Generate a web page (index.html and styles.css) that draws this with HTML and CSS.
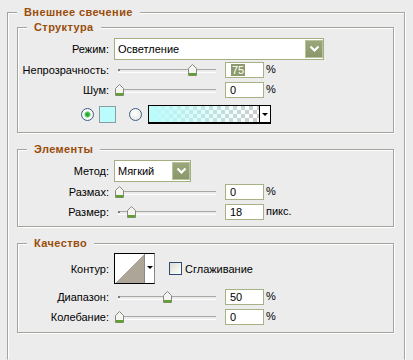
FILE: index.html
```html
<!DOCTYPE html>
<html lang="ru">
<head>
    <meta charset="UTF-8">
    <title>Внешнее свечение</title>
    <link rel="stylesheet" href="styles.css">
</head>
<body>
    <div class="group outer">
        <span class="title">Внешнее свечение</span>

        <div class="group structure">
            <span class="title">Структура</span>
            <div class="row r-select">
                <span class="lbl">Режим:</span>
                <div class="select wide">Осветление<span class="drop"><svg width="11" height="8" viewBox="0 0 11 8"><polyline points="1.5,1.5 5.5,5.5 9.5,1.5" fill="none" stroke="#fff" stroke-width="2.2"/></svg></span></div>
            </div>
            <div class="row r-input first">
                <span class="lbl">Непрозрачность:</span>
                <div class="slider"><span class="thumb" style="left: 74px"></span></div>
                <div class="field"><span class="sel">75</span></div>
                <span class="unit">%</span>
            </div>
            <div class="row r-input">
                <span class="lbl">Шум:</span>
                <div class="slider"><span class="thumb" style="left: 1px"></span></div>
                <div class="field">0</div>
                <span class="unit">%</span>
            </div>
            <div class="row r-color">
                <span class="radio on"></span>
                <span class="swatch"></span>
                <span class="radio gap"></span>
                <div class="gradient"><span class="grad-fill"></span><span class="arrow"><i></i></span></div>
            </div>
        </div>

        <div class="group elements">
            <span class="title">Элементы</span>
            <div class="row r-select">
                <span class="lbl">Метод:</span>
                <div class="select short">Мягкий<span class="drop"><svg width="11" height="8" viewBox="0 0 11 8"><polyline points="1.5,1.5 5.5,5.5 9.5,1.5" fill="none" stroke="#fff" stroke-width="2.2"/></svg></span></div>
            </div>
            <div class="row r-input first">
                <span class="lbl">Размах:</span>
                <div class="slider"><span class="thumb" style="left: 1px"></span></div>
                <div class="field">0</div>
                <span class="unit">%</span>
            </div>
            <div class="row r-input">
                <span class="lbl">Размер:</span>
                <div class="slider"><span class="thumb" style="left: 13px"></span></div>
                <div class="field">18</div>
                <span class="unit">пикс.</span>
            </div>
        </div>

        <div class="group quality">
            <span class="title">Качество</span>
            <div class="row r-contour">
                <span class="lbl">Контур:</span>
                <div class="contour"><span class="curve"></span><span class="arrow"><i></i></span></div>
                <span class="check"></span>
                <span class="check-text">Сглаживание</span>
            </div>
            <div class="row r-input first">
                <span class="lbl">Диапазон:</span>
                <div class="slider"><span class="thumb" style="left: 49px"></span></div>
                <div class="field">50</div>
                <span class="unit">%</span>
            </div>
            <div class="row r-input">
                <span class="lbl">Колебание:</span>
                <div class="slider"><span class="thumb" style="left: 1px"></span></div>
                <div class="field">0</div>
                <span class="unit">%</span>
            </div>
        </div>
    </div>
</body>
</html>
```

FILE: styles.css
```css
* {
    box-sizing: border-box;
}
html {
    overflow: hidden;
}
body {
    margin: 0;
    background: #ececec;
    font-family: 'Liberation Sans', Arial, sans-serif;
    font-size: 11px;
    color: #000;
    height: 360px;
    overflow: hidden;
}
.group {
    position: relative;
    border: 1px solid #a4a49c;
    box-shadow: 1px 1px 0 #fff, inset 1px 1px 0 #fff;
}
.title {
    position: absolute;
    top: -7px;
    left: 9px;
    padding: 0 7px;
    background: #ececec;
    color: #9a4d0a;
    font-weight: bold;
    letter-spacing: 0.4px;
    line-height: 13px;
}
.outer {
    margin: 12px 0 0 7px;
    width: 398px;
    height: 348px;
    border-bottom-color: #ececec;
    box-shadow: 1px 0 0 #fff, inset 1px 1px 0 #fff;
    padding: 14px 0 0 9px;
}
.outer > .group {
    width: 377px;
}
.structure {
    height: 106px;
    padding-top: 10px;
}
.elements {
    margin-top: 16px;
    height: 78px;
    padding-top: 10px;
}
.quality {
    margin-top: 16px;
    height: 90px;
    padding-top: 9px;
}
.row {
    display: flex;
    align-items: center;
}
.lbl {
    width: 91px;
    text-align: right;
    margin-right: 5px;
    white-space: nowrap;
}
.r-select {
    height: 22px;
}
.r-input {
    height: 16px;
    margin-top: 4px;
}
.r-input.first {
    margin-top: 2px;
}
.quality .r-input.first {
    margin-top: 5px;
}
.r-color {
    height: 19px;
    margin-top: 7px;
    padding-left: 63px;
}
.r-contour {
    height: 31px;
}

/* select */
.select {
    position: relative;
    height: 22px;
    background: #fff;
    border: 1px solid #a3af80;
    padding: 4px 0 0 3px;
    line-height: 13px;
}
.select.wide {
    width: 210px;
}
.select.short {
    width: 77px;
}
.drop {
    position: absolute;
    right: 0;
    top: 1px;
    width: 18px;
    height: 18px;
    background: linear-gradient(#9aa77a, #8a976a);
    border: 1px solid #b8c29c;
    display: flex;
    align-items: center;
    justify-content: center;
}

/* slider */
.slider {
    position: relative;
    width: 104px;
    height: 16px;
}
.slider::before {
    content: '';
    position: absolute;
    left: 4px;
    right: 2px;
    top: 7px;
    height: 2px;
    border-top: 1px solid #a9a9a3;
    border-bottom: 1px solid #fff;
}
.slider::after {
    content: '';
    position: absolute;
    left: 4px;
    top: 7px;
    width: 2px;
    height: 2px;
    background: #7c7c78;
}
.thumb {
    position: absolute;
    top: 2px;
    width: 9px;
    height: 12px;
    z-index: 1;
    background: url("data:image/svg+xml,%3Csvg xmlns='http://www.w3.org/2000/svg' width='9' height='12'%3E%3Cpath d='M0.5 4.5 L4.5 0.5 L8.5 4.5 V11.5 H0.5 Z' fill='%23f4f4f0' stroke='%23888880'/%3E%3Crect x='1' y='9' width='7' height='2.5' fill='%235ea12e'/%3E%3C/svg%3E") no-repeat;
}
.field {
    width: 39px;
    height: 16px;
    margin-left: 7px;
    background: #fff;
    border: 1px solid #a6b283;
    padding: 1px 0 0 4px;
    line-height: 12px;
}
.sel {
    display: inline-block;
    background: #8d9a6c;
    color: #fff;
    padding: 0 1px;
    margin-left: 1px;
}
.unit {
    margin-left: 2px;
    margin-top: -3px;
}

/* colour row */
.radio {
    width: 13px;
    height: 13px;
    border-radius: 50%;
    border: 1px solid #3d5f86;
    background: radial-gradient(circle at 40% 40%, #fff, #e3e3dc);
}
.radio.on {
    background: radial-gradient(circle, #149a2a 0, #3cc04a 2px, #a8e0a0 3px, #fff 3.5px, #e6e6e0 100%);
}
.radio.gap {
    margin-left: 13px;
}
.swatch {
    width: 17px;
    height: 17px;
    margin-left: 5px;
    background: #bafcfb;
    border: 1px solid #8a9ea2;
}
.gradient {
    display: flex;
    width: 123px;
    height: 19px;
    margin-left: 6px;
    border: 1px solid #000;
    border-bottom-width: 2px;
    background-color: #fff;
    background-image:
        linear-gradient(45deg, #ccc 25%, transparent 25%, transparent 75%, #ccc 75%),
        linear-gradient(45deg, #ccc 25%, transparent 25%, transparent 75%, #ccc 75%);
    background-size: 8px 8px;
    background-position: 0 0, 4px 4px;
}
.grad-fill {
    flex: 1;
    background: linear-gradient(to right, #bafcfb, rgba(186, 252, 251, 0));
}
.arrow {
    width: 11px;
    background: #fff;
    border-left: 1px solid #000;
    display: flex;
    align-items: center;
    justify-content: center;
}
.arrow i {
    width: 0;
    height: 0;
    border-left: 3px solid transparent;
    border-right: 3px solid transparent;
    border-top: 3px solid #000;
}

/* contour */
.contour {
    display: flex;
    width: 41px;
    height: 31px;
    border: 1px solid #000;
    border-right-color: #888;
}
.curve {
    width: 30px;
    background: linear-gradient(to top left, #aca598 50%, #fff 50%);
}
.contour .arrow {
    border-left: 1px solid #888;
    width: 10px;
    align-items: flex-start;
    padding-top: 12px;
}
.check {
    width: 13px;
    height: 13px;
    margin-left: 14px;
    border: 1px solid #2c4c74;
    background: linear-gradient(135deg, #dcdcd4, #fff);
}
.check-text {
    margin-left: 3px;
}
```
